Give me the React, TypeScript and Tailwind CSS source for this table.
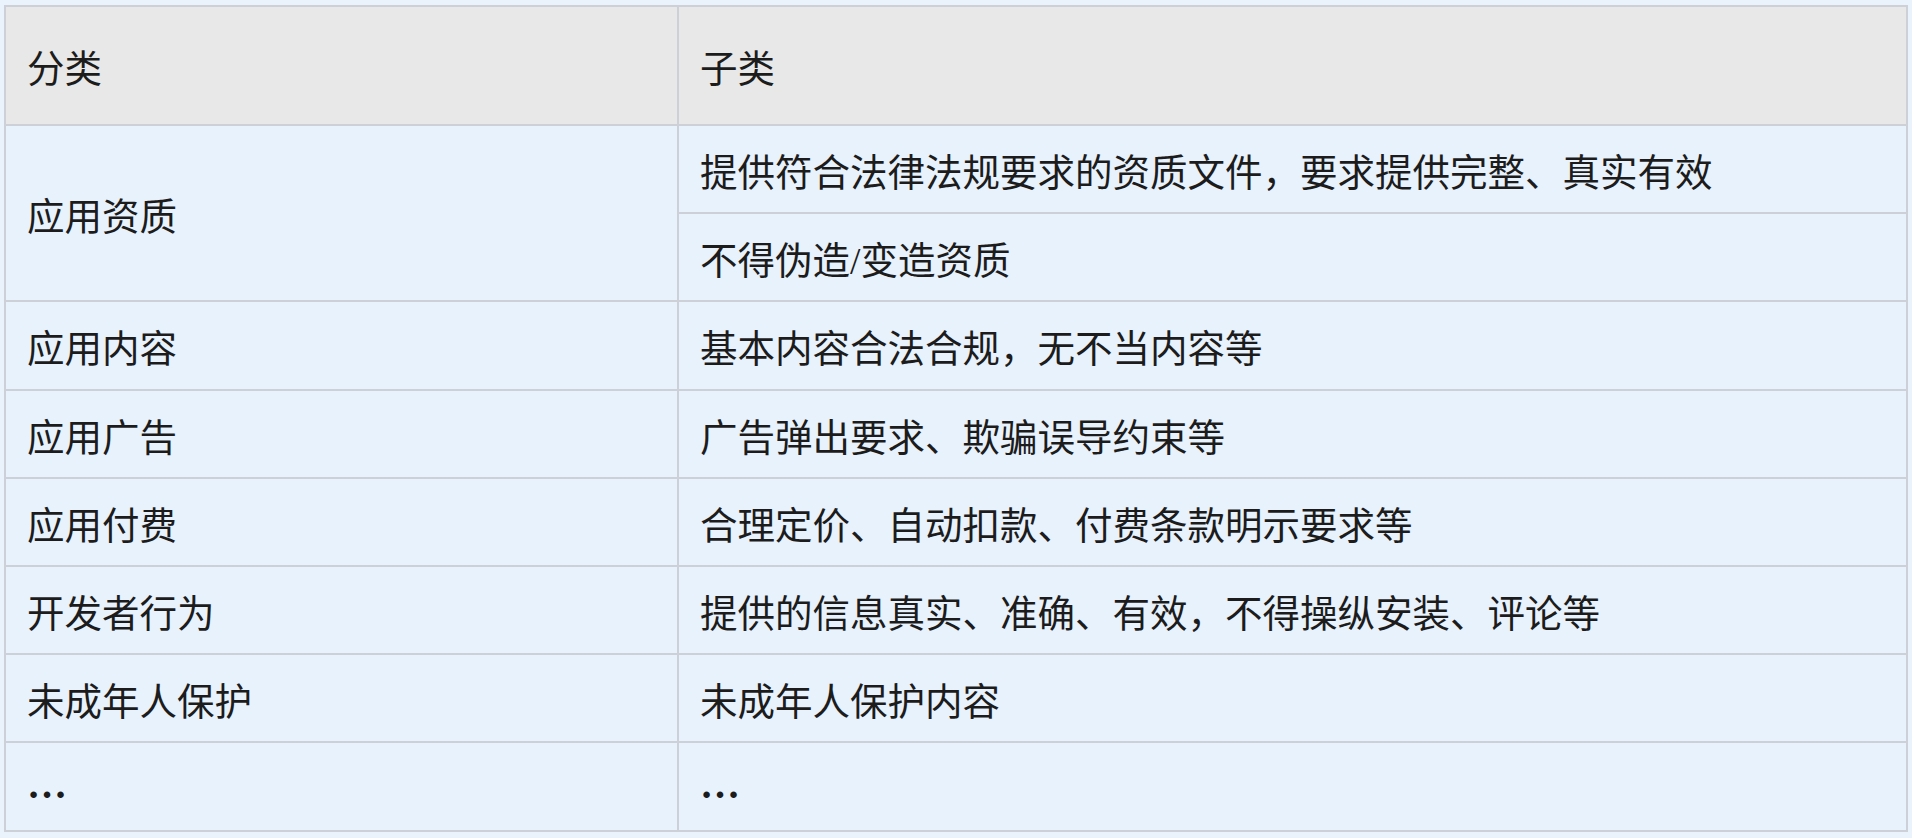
import React from 'react';

interface Row {
  category: string;
  items: string[];
}

const rows: Row[] = [
  { category: '应用资质', items: ['提供符合法律法规要求的资质文件，要求提供完整、真实有效', '不得伪造/变造资质'] },
  { category: '应用内容', items: ['基本内容合法合规，无不当内容等'] },
  { category: '应用广告', items: ['广告弹出要求、欺骗误导约束等'] },
  { category: '应用付费', items: ['合理定价、自动扣款、付费条款明示要求等'] },
  { category: '开发者行为', items: ['提供的信息真实、准确、有效，不得操纵安装、评论等'] },
  { category: '未成年人保护', items: ['未成年人保护内容'] },
  { category: '…', items: ['…'] },
];

export default function App() {
  const cell = 'border-2 border-[#cdd1d7] pl-[21px] pt-[10px] align-middle';

  // the trailing "…" row is drawn heavier, as in the slide
  const label = (text: string) =>
    text === '…' ? <span className="relative -top-[6px] font-bold text-[40px]">…</span> : text;

  return (
    <div className="w-full h-[838px] bg-[#eaf2fc] pt-[5px] px-[4px] font-['Liberation_Serif','Noto_Sans_CJK_SC',serif] text-[37.5px] text-[#1c1c1c]">
      <table className="w-full table-fixed border-collapse">
        <colgroup>
          <col className="w-[673px]" />
          <col />
        </colgroup>
        <thead>
          <tr className="h-[119px] bg-[#e8e8e8]">
            <th className={`${cell} text-left font-normal`}>分类</th>
            <th className={`${cell} text-left font-normal`}>子类</th>
          </tr>
        </thead>
        <tbody className="bg-[#e8f2fc]">
          {rows.map((row) =>
            row.items.map((item, i) => (
              <tr key={row.category + i} className="h-[88.2px]">
                {i === 0 && (
                  <td className={cell} rowSpan={row.items.length}>
                    {label(row.category)}
                  </td>
                )}
                <td className={cell}>{label(item)}</td>
              </tr>
            ))
          )}
        </tbody>
      </table>
    </div>
  );
}
